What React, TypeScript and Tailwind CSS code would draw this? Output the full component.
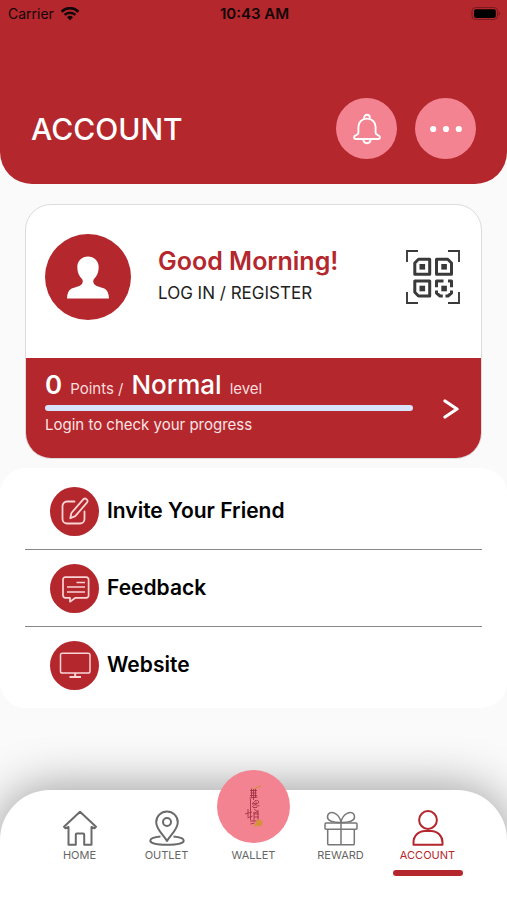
import type { ReactNode } from "react";

function WifiIcon() {
  return (
    <svg className="h-3.5 w-5" viewBox="0 0 20 14" fill="none" stroke="#120607" aria-hidden="true">
      <path d="M1.6 4.700a12 12 0 0 1 16.800 0" strokeWidth="2.600" />
      <path d="M4.600 7.900a7.800 7.800 0 0 1 10.800 0" strokeWidth="2.400" />
      <path d="M10 13.200 7 10.300a4.300 4.300 0 0 1 6 0Z" fill="#120607" stroke="none" />
    </svg>
  );
}

function BatteryIcon() {
  return (
    <svg className="h-3.5 w-8" viewBox="0 0 32 14" aria-hidden="true">
      <rect x="3" y=".5" width="25.500" height="12" rx="3.500" fill="none" stroke="#7c1a1f" />
      <rect x="5" y="2.300" width="21.800" height="8.600" rx="1.800" fill="#000" />
      <path d="M29.700 4.500v4.200a2.300 2.300 0 0 0 0-4.200Z" fill="#7c1a1f" />
    </svg>
  );
}

function BellIcon() {
  return (
    <svg className="h-8 w-7" viewBox="0 0 28 32" fill="none" stroke="#fff" strokeWidth="1.900" strokeLinejoin="round" aria-hidden="true">
      <path d="M11.200 5.800V4.600a2.800 2.800 0 0 1 5.600 0v1.200" />
      <path d="M14 5.600c-5 0-8.600 3.600-8.600 8.400v5.800c0 1.400-1 1.900-2.300 2.300-1.400.400-2 1.100-2 2.200 0 1 .800 1.700 1.800 1.700h22.200c1 0 1.800-.700 1.800-1.700 0-1.100-.600-1.800-2-2.200-1.300-.400-2.300-.900-2.300-2.300V14c0-4.800-3.600-8.400-8.600-8.400Z" />
      <path d="M10.200 26.200c.2 2.400 1.700 4 3.800 4s3.600-1.600 3.800-4" />
    </svg>
  );
}

function DotsIcon() {
  return (
    <svg className="h-2 w-8" viewBox="0 0 32 8" fill="#fff" aria-hidden="true">
      <circle cx="3.200" cy="4" r="3.100" />
      <circle cx="16" cy="4" r="3.100" />
      <circle cx="28.800" cy="4" r="3.100" />
    </svg>
  );
}

function PersonIcon() {
  return (
    <svg className="h-11 w-11" viewBox="0 0 44 44" fill="#fff" aria-hidden="true">
      <path d="M22 1.500c-6 0-10.700 4.300-10.700 10.400 0 5.200 1.700 9.200 4.900 12.400.6.800.7 2 .3 3.500-.5 1.700-1.900 2.700-3.700 3.400-2.500.9-5.200 1.300-7.600 2.500C2.600 35.100 1.200 38.200 1 43.500h42c-.2-5.300-1.600-8.400-4.200-9.800-2.400-1.200-5.100-1.600-7.600-2.500-1.800-.7-3.200-1.700-3.700-3.400-.4-1.500-.3-2.700.3-3.500 3.200-3.200 4.900-7.200 4.900-12.400C32.700 5.800 28 1.500 22 1.500Z" />
    </svg>
  );
}

function QrIcon() {
  return (
    <svg className="size-[54px]" viewBox="0 0 54 54" fill="none" stroke="#3a3a3a" aria-hidden="true">
      <path d="M1 12V1h11M42 1h11v11M53 42v11H42M12 53H1V42" strokeWidth="1.900" />
      <g strokeWidth="3" strokeLinejoin="round">
        <path d="M12.500 9.300h11.200v15H8.800V13Z" />
        <path d="M30.500 9.300h11.200l3.800 3.700v11.300h-15Z" />
        <path d="M8.800 31h14.900v15H12.500l-3.700-3.700Z" />
        <path d="M30.500 37.300V31h7M42 31h3.500v6.300M30.500 40.500v2.500l3.500 3h2.800M39.500 46h2.500l3.500-3v-2.500" />
      </g>
      <g fill="#3a3a3a" stroke="none">
        <rect x="13.500" y="14" width="5.600" height="5.600" />
        <rect x="35.300" y="14" width="5.600" height="5.600" />
        <rect x="13.500" y="35.700" width="5.600" height="5.600" />
        <rect x="35.300" y="35.700" width="5.600" height="5.600" />
      </g>
    </svg>
  );
}

function ChevronIcon() {
  return (
    <svg className="h-5 w-4" viewBox="0 0 16 20" fill="none" stroke="#fff" strokeWidth="3.200" strokeLinecap="round" strokeLinejoin="round" aria-hidden="true">
      <path d="M2 2l12 8-12 8" />
    </svg>
  );
}

function EditIcon() {
  return (
    <svg className="size-8" viewBox="0 0 32 32" fill="none" stroke="#fbd5d6" strokeWidth="1.800" strokeLinecap="round" strokeLinejoin="round" aria-hidden="true">
      <path d="M15.500 6.500H8A4.500 4.500 0 0 0 3.500 11v13A4.500 4.500 0 0 0 8 28.500h13a4.500 4.500 0 0 0 4.500-4.500v-7.500" />
      <path d="M24 4.600a2.400 2.400 0 0 1 3.900 3L16.300 21.200l-5 2 1.100-5.200Z" />
    </svg>
  );
}

function FeedbackIcon() {
  return (
    <svg className="size-8" viewBox="0 0 32 32" fill="none" stroke="#fbd5d6" strokeWidth="1.700" strokeLinejoin="round" aria-hidden="true">
      <path d="M6.300 5.200h21a2.300 2.300 0 0 1 2.300 2.300v16a2.300 2.300 0 0 1-2.300 2.300H16.500L11 29.700v-3.900H6.300A2.300 2.300 0 0 1 4 23.500v-16a2.300 2.300 0 0 1 2.300-2.300Z" />
      <path d="M17.500 10.500h8.500M8 15h18M8 20h18" />
    </svg>
  );
}

function MonitorIcon() {
  return (
    <svg className="size-8" viewBox="0 0 32 32" fill="none" stroke="#fbd5d6" strokeWidth="1.500" aria-hidden="true">
      <rect x="1.500" y="4.200" width="29.500" height="19.800" rx="1.800" />
      <path d="M16.200 24v3.500M10.500 28h11.500" strokeWidth="2" />
    </svg>
  );
}

function HomeIcon() {
  return (
    <svg className="size-9" viewBox="0 0 36 36" fill="none" stroke="#6a6a6a" strokeWidth="2" strokeLinejoin="round" aria-hidden="true">
      <path d="M18 1.700 2 16.700l1.500 1.500L6.500 17v17.800h7.300V24.500a1 1 0 0 1 1-1h6.400a1 1 0 0 1 1 1v10.300h7.300V17l3 1.200 1.500-1.500Z" />
    </svg>
  );
}

function OutletIcon() {
  return (
    <svg className="size-9" viewBox="0 0 36 36" fill="none" stroke="#6a6a6a" strokeWidth="2" aria-hidden="true">
      <path d="M18 31C14.500 25 7.200 19.500 7.200 12.300a10.800 10.800 0 0 1 21.600 0C28.800 19.500 21.500 25 18 31Z" strokeLinejoin="round" />
      <circle cx="18" cy="12" r="4" />
      <path d="M11.500 26.500C5 27 1.300 28.700 1.300 30.700c0 2.400 6 4 16.700 4s16.700-1.600 16.700-4c0-2-3.700-3.700-10.200-4.200" />
    </svg>
  );
}

function GiftIcon() {
  return (
    <svg className="size-9" viewBox="0 0 36 36" fill="none" stroke="#777" strokeWidth="1.500" strokeLinejoin="round" aria-hidden="true">
      <rect x="2" y="13" width="32" height="6.300" rx="1" />
      <path d="M4.700 19.300v14.400c0 .700.400 1.100 1.100 1.100h24.400c.700 0 1.100-.400 1.100-1.100V19.300M18 13v21.800" />
      <path d="M18 12.500C12 12.500 4.500 11.500 4.500 7c0-4.500 4-5.300 7-3.800C15 5 17.500 9 18 12.500c.5-3.500 3-7.500 6.500-9.300 3-1.500 7-.7 7 3.800 0 4.500-7.500 5.500-13.500 5.500Z" />
    </svg>
  );
}

function AccountIcon() {
  return (
    <svg className="size-9" viewBox="0 0 36 36" fill="none" stroke="#b3272d" strokeWidth="2" strokeLinejoin="round" aria-hidden="true">
      <circle cx="18" cy="10" r="8.900" />
      <path d="M3.500 34.700v-2.200C3.500 26 8.500 21 15 21h6c6.500 0 11.500 5 11.500 11.500v2.200Z" />
    </svg>
  );
}

function WalletEmblem() {
  return (
    <svg className="h-11 w-6" viewBox="0 0 24 44" fill="none" stroke="#a43345" strokeWidth=".9" aria-hidden="true">
      <path d="M11 4.500 14 3l5-2.500" stroke="#d98a56" strokeWidth="1.500" />
      <path d="M8 5.500h7M8.500 8h6M8 10.500h7M9.500 3.500v9M13.500 4v9M11.500 4v11M7.500 13l8-1" />
      <path d="M8.500 14v21M14 15l-4 4 5-1-5 4M13.500 16c4-2 4 3 1 3s1 4 3 1M11 22.500h4M12 24l4 3-5 1M6 24v8M3 29l7-2M5.500 33l5-2M12 29h5M12 32h5M12 28v8M16 25v10M8 36h7M8.500 39l4-1" />
      <circle cx="17" cy="38" r="3.400" fill="#d6923d" stroke="none" />
      <path d="m12 41 3-2" stroke="#d6923d" strokeWidth="2" />
    </svg>
  );
}

function MenuRow({ icon, label }: { icon: ReactNode; label: string }) {
  return (
    <li>
      <a href="#" className="flex h-[76px] items-center gap-2 pl-[25px] text-[21px] font-semibold text-black">
        <span className="flex size-[49px] items-center justify-center rounded-full bg-[#b3272d]">{icon}</span>
        {label}
      </a>
    </li>
  );
}

function NavItem({ icon, label, active = false }: { icon: ReactNode; label: string; active?: boolean }) {
  return (
    <a
      href="#"
      aria-current={active ? "page" : undefined}
      className={`flex flex-1 flex-col items-center text-[11px] leading-[14px] ${active ? "text-[#b3272d]" : "text-[#666]"}`}
    >
      <span className="flex h-9 items-start justify-center">{icon}</span>
      <span className="mt-0.5">{label}</span>
      {active && <span className="mt-2 h-1.5 w-[70px] rounded-sm bg-[#b3272d]" />}
    </a>
  );
}

export default function App() {
  return (
    <div className="flex min-h-screen flex-col overflow-hidden bg-[#fafafa] font-['Inter','Liberation_Sans',sans-serif]">
      <header className="rounded-b-[32px] bg-[#b3272d] pb-[25px]">
        <div className="grid h-7 grid-cols-3 items-center pr-1.5 pl-2 text-[#120607]">
          <span className="flex items-center gap-1.5 text-sm">
            Carrier
            <WifiIcon />
          </span>
          <time className="text-center text-[15px] leading-5 font-semibold">10:43 AM</time>
          <span className="flex justify-end">
            <BatteryIcon />
          </span>
        </div>
        <div className="mt-[70px] flex items-center gap-[18px] px-[31px]">
          <h1 className="flex-1 text-3xl font-medium text-white">ACCOUNT</h1>
          <button type="button" aria-label="Notifications" className="flex size-[61px] items-center justify-center rounded-full bg-[#f48391]">
            <BellIcon />
          </button>
          <button type="button" aria-label="More" className="flex size-[61px] items-center justify-center rounded-full bg-[#f48391]">
            <DotsIcon />
          </button>
        </div>
      </header>

      <main>
        <section className="mx-[25px] mt-5 overflow-hidden rounded-[26px] border border-[#dcdcdc] bg-white">
          <div className="flex h-[153px] items-center pr-[21px] pb-[9px] pl-[19px]">
            <span className="flex size-[86px] shrink-0 items-center justify-center rounded-full bg-[#b3272d]">
              <PersonIcon />
            </span>
            <div className="ml-[27px] flex-1">
              <h2 className="text-[25px] leading-8 font-semibold text-[#b3272d]">Good Morning!</h2>
              <a href="#" className="block text-[17px] leading-8 text-[#222]">LOG IN / REGISTER</a>
            </div>
            <button type="button" aria-label="Show QR code">
              <QrIcon />
            </button>
          </div>
          <div className="flex h-[100px] items-center bg-[#b3272d] pr-[22px] pl-[19px] text-white">
            <div className="flex-1 pb-3">
              <p className="flex items-baseline gap-2 leading-8">
                <span className="text-[26px] font-semibold">0</span>
                <span className="text-[15px] text-[#fbdcdc]">Points /</span>
                <span className="text-[26px] font-medium">Normal</span>
                <span className="text-[15px] text-[#fbdcdc]">level</span>
              </p>
              <div role="progressbar" aria-label="Level progress" aria-valuenow={0} className="h-1.5 rounded-full bg-[#d9e3fa]" />
              <p className="mt-1 text-[15px] leading-5 text-[#fbe4e4]">Login to check your progress</p>
            </div>
            <button type="button" aria-label="Check progress" className="ml-[30px] pt-0.5">
              <ChevronIcon />
            </button>
          </div>
        </section>

        <ul className="mt-[9px] divide-y divide-[#888] rounded-[26px] bg-white px-[25px] py-[5px]">
          <MenuRow icon={<EditIcon />} label="Invite Your Friend" />
          <MenuRow icon={<FeedbackIcon />} label="Feedback" />
          <MenuRow icon={<MonitorIcon />} label="Website" />
        </ul>
      </main>

      <nav className="mt-auto flex rounded-t-[50px] bg-white px-9 pt-5 pb-6 shadow-[0_0_50px_rgba(0,0,0,0.42)]">
        <NavItem icon={<HomeIcon />} label="HOME" />
        <NavItem icon={<OutletIcon />} label="OUTLET" />
        <NavItem
          icon={
            <span className="-mt-10 flex size-[73px] shrink-0 items-center justify-center rounded-full bg-[#f48391]">
              <WalletEmblem />
            </span>
          }
          label="WALLET"
        />
        <NavItem icon={<GiftIcon />} label="REWARD" />
        <NavItem icon={<AccountIcon />} label="ACCOUNT" active />
      </nav>
    </div>
  );
}
